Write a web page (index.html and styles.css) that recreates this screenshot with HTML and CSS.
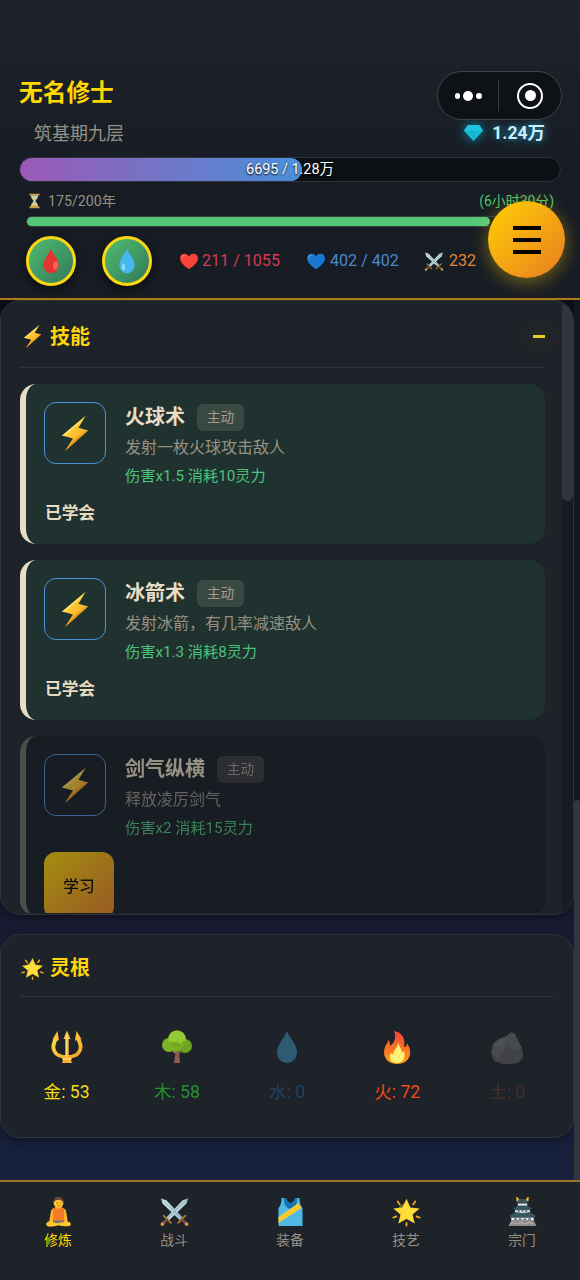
FILE: index.html
```html
<!DOCTYPE html>
<html lang="zh-CN">
<head>
<meta charset="utf-8">
<title>修炼</title>
<link rel="stylesheet" href="styles.css">
</head>
<body>
<svg class="defs" aria-hidden="true">
  <defs>
    <linearGradient id="gold" x1="0" y1="0" x2="1" y2="1"><stop offset="0" stop-color="#ffe04a"/><stop offset="1" stop-color="#f5a21c"/></linearGradient>
    <linearGradient id="steel" x1="0" y1="0" x2="1" y2="1"><stop offset="0" stop-color="#dceef2"/><stop offset="1" stop-color="#9cc0ca"/></linearGradient>
    <linearGradient id="fire" x1="0" y1="0" x2="0" y2="1"><stop offset="0" stop-color="#f44336"/><stop offset="1" stop-color="#ff9d12"/></linearGradient>
    <symbol id="bolt" viewBox="0 0 26 35"><path d="M23.500 0 0 19.500l11 3L3 35l23-20.500-9.500-2.700z" fill="url(#gold)"/><path d="m3 35 23-20.500-1.500-.4L11.500 24z" fill="#ef9a1a"/><path d="M23.500 0 0 19.500l2.500.7L18 7z" fill="#ffe873" opacity=".7"/></symbol>
    <symbol id="star" viewBox="0 0 32 32"><path d="m16 1.500 4.300 9.400 10.200 1.200-7.700 6.700 2.300 10-9.100-5.100-9 5.100 2.300-10-7.800-6.700 10.200-1.200z" fill="#fdd835"/><path d="m16 4 2 9h9l-8 4 4 9-7-5-6 4 3-9-6-5z" fill="#ffeb4f" opacity=".4"/><path d="m6.300 4.500 2.300 3.200M25.700 4.500l-2.300 3.200M1.500 22.200l3.400-1.400M30.500 22.200l-3.400-1.400M16 28v3" stroke="#f6a718" stroke-width="2" stroke-linecap="round"/></symbol>
    <symbol id="drop" viewBox="0 0 32 32"><path d="M16 1c-1 4-9.500 13-9.500 20.500a9.500 9.500 0 0 0 19 0C25.500 14 17 5 16 1z" fill="currentColor"/></symbol>
    <symbol id="heart" viewBox="0 0 32 32"><path d="M16 29C9 24 1 18 1 10.500 1 6 4.500 3 8.500 3c3.500 0 6 1.800 7.500 4.500C17.500 4.800 20 3 23.500 3 27.500 3 31 6 31 10.500 31 18 23 24 16 29z" fill="currentColor"/><path d="M4 10c0-3 2-5 5-5" fill="none" stroke="#fff" stroke-width="2" stroke-linecap="round" opacity=".25"/></symbol>
    <symbol id="swords" viewBox="0 0 32 32"><path d="m1 1 6 2 18 19-3 3L3 7z" fill="url(#steel)"/><path d="m31 1-6 2L7 22l3 3L29 7z" fill="url(#steel)"/><path d="m31 1-23 22" stroke="#6b8e99" stroke-width=".8"/><path d="m1 1 23 22" stroke="#6b8e99" stroke-width=".8"/><path d="m4 20 8 8M28 20l-8 8" stroke="#b27a27" stroke-width="2" stroke-linecap="round"/><path d="m8 24-5 5M24 24l5 5" stroke="#794f41" stroke-width="3.200"/><circle cx="2.600" cy="29.400" r="2" fill="#d39c36"/><circle cx="29.400" cy="29.400" r="2" fill="#d39c36"/></symbol>
    <symbol id="hourglass" viewBox="0 0 16 22"><path d="M3 3h10c0 5-3.500 6-3.500 8S13 14 13 19H3c0-5 3.500-6 3.500-8S3 8 3 3z" fill="#a8d5e7"/><path d="M4.500 6h7L8 10.500zM4 18c1-3 3-4 4-6 1 2 3 3 4 6z" fill="#f6c64a"/><path d="M1 1h14v2.500H1zM1 18.500h14V21H1z" fill="#d99b3b"/></symbol>
    <symbol id="gem" viewBox="0 0 22 19"><path d="M5 1h12l4 6-10 11L1 7z" fill="#18bdd8"/><path d="M5 1h12l4 6H1z" fill="#1ec5dc"/><path d="m7 7 4 11 4-11" fill="#15b4d0"/></symbol>
    <symbol id="trident" viewBox="0 0 32 34"><path d="M5.500 8C-1 18 3 27 16 27S33 18 26.500 8" fill="none" stroke="url(#gold)" stroke-width="3.800"/><path d="M16 7v20" stroke="#ffbe35" stroke-width="3.400"/><path d="M16 .5 19.500 9h-7zM6.500 1 8 10.500l-6.500-1.300zM25.500 1 24 10.500l6.500-1.300z" fill="#ffc13a"/><path d="M11 27h10l-1 3 1 3H11l1-3z" fill="#ffad35"/><path d="M11.500 29h9" stroke="#ffdd75" stroke-width="1.500"/><path d="M15.500 4v22" stroke="#ffe17d"/></symbol>
    <symbol id="tree" viewBox="0 0 32 34"><circle cx="8" cy="15" r="7" fill="#7cb529"/><circle cx="24" cy="16" r="7" fill="#6aa421"/><circle cx="16" cy="9" r="8.800" fill="#93ca32"/><circle cx="15" cy="17" r="5.500" fill="#78b129"/><path d="m13 33 1.300-9-5-4 6 2.500 1-2.500 1 2.500 5-3-4 4.500.700 9z" fill="#8d5c52"/><path d="M9 12c5 5 11 5 15-1" fill="none" stroke="#6aa421" stroke-width="1.500"/></symbol>
    <symbol id="flame" viewBox="0 0 28 34"><path d="M11 1c8 1 12 8 10 16 2 0 3-2 3-4 7 10 2 21-10 21C3 34-1 25 2 17c1-3 3-4 3-7 2 1 2 4 2 6 4-3 7-8 4-15z" fill="url(#fire)"/><path d="M15 12c1 5 4 7 4 11l2-2c2 7-1 12-7 12-7 0-9-6-6-10l2 2c0-5 5-7 5-13z" fill="#fff176"/></symbol>
    <symbol id="rock" viewBox="0 0 32 32"><path d="M1 22 3 13l6-5 6-2 5-4 3 1 7 14 1 9-5 5-13 1-9-3z" fill="#8c8c8c"/><path d="m21 2-4 12 4 5 9-2 1 9-5 5-13 1-9-3-3-7 7 5 5-7" fill="#787878"/><path d="m16 6-3 8-7 2-2-3z" fill="#9b9b9b"/></symbol>
    <symbol id="monk" viewBox="0 0 28 32"><path d="M4 27 6 15q2-4 8-4t8 4l2 12" fill="#fbb92b"/><path d="M8 12q6-3 12 0v15H8z" fill="#f47b27"/><path d="M8 25h12v4H8z" fill="#82766b"/><path d="M1 28c3-4 8 0 12 0 6-1 12-3 14 0 2 5-9 3-13 2-4 1-14 4-13-2z" fill="#ffc62d"/><rect x="11.500" y="9" width="5" height="4" fill="#eaa021"/><circle cx="14" cy="6.500" r="5.200" fill="#ffc62d"/><path d="M8.700 7C8 2 10 0 14 0s6.200 2 5.300 7c-1-3-3-4-5.300-4s-4.500 1-5.300 4z" fill="#65433a"/><path d="M11.500 6.500h2M15 6.500h2M12.600 9q1.400 1 2.800 0" stroke="#65433a" fill="none" stroke-width=".7"/></symbol>
    <symbol id="vest" viewBox="0 0 26 30"><path d="M4 1h4q5 10 10 0h4q0 7 3 10v18H1V11Q4 8 4 1z" fill="#4fb9e6"/><path d="M8 1q5 10 10 0h2q-1 11-7 11T6 1z" fill="#1773b7"/><path d="M1 20 21 6q1 3 3 5L1 26z" fill="#fdc92e"/></symbol>
    <symbol id="castle" viewBox="0 0 30 32"><path d="M3 25h24l3 6H0z" fill="#8f8a88"/><path d="M3 20h24v5H3z" fill="#e9eef0"/><path d="M7 13h16v5H7zM10 7h10v4H10z" fill="#e7edf0"/><path d="M8 6h14l-3-4h-8zM5 12l6-3h8l6 3-2 2H7zM1 20l6-4 8 1 8-1 6 4-1 2H2z" fill="#38565e"/><path d="M9 0v4l2-1zM21 0v4l-2-1z" fill="#f5bd26" stroke="#f5bd26"/><path d="M6 23.500h3m2 0h3m2 0h3m2 0h3M10 15h2m2 0h2m2 0h2" stroke="#344b52" stroke-width="1.400"/><path d="m2 29 3-2 4 2 4-2 5 2 4-2 5 2" fill="none" stroke="#bbb4b0" stroke-width="1.200"/></symbol>
  </defs>
</svg>
<div class="app">
  <header class="top">
    <h1 class="player">无名修士</h1>
    <div class="rank-row"><span>筑基期九层</span><span class="gems"><svg><use href="#gem"/></svg>1.24万</span></div>
    <div class="exp"><div class="exp-fill"></div><span class="exp-text">6695 / 1.28万</span></div>
    <div class="age-row"><span class="age"><svg><use href="#hourglass"/></svg>175/200年</span><span class="left">(6小时30分)</span></div>
    <div class="life"><div class="life-fill"></div></div>
    <div class="status">
      <div class="potion"><svg class="red"><use href="#drop"/><ellipse class="red-shine" cx="17.500" cy="18.500" rx="2.500" ry="4"/></svg></div>
      <div class="potion second"><svg class="blue"><use href="#drop"/><ellipse class="blue-shine" cx="9.500" cy="20" rx="1.800" ry="3.500"/></svg></div>
      <span class="stat hp"><svg><use href="#heart"/></svg>211 / 1055</span>
      <span class="stat mp"><svg><use href="#heart"/></svg>402 / 402</span>
      <span class="stat atk"><svg><use href="#swords"/></svg>232</span>
    </div>
    <div class="capsule"><div class="dots"><i></i><b></b><i></i></div><div class="target"><span></span></div></div>
    <button class="fab" aria-label="菜单"><i></i><i></i><i></i></button>
  </header>

  <main class="scroll">
    <div class="content">
      <section class="panel skills">
        <div class="skills-body">
          <h2 class="title"><svg><use href="#bolt"/></svg><span>技能</span><i class="fold"></i></h2>
          <article class="skill learned">
            <div class="info"><div class="pic"><svg><use href="#bolt"/></svg></div><div class="text"><div class="name-row"><h3>火球术</h3><span class="tag">主动</span></div><p class="desc">发射一枚火球攻击敌人</p><p class="effect">伤害x1.5 消耗10灵力</p></div></div>
            <div class="done">已学会</div>
          </article>
          <article class="skill learned">
            <div class="info"><div class="pic"><svg><use href="#bolt"/></svg></div><div class="text"><div class="name-row"><h3>冰箭术</h3><span class="tag">主动</span></div><p class="desc">发射冰箭，有几率减速敌人</p><p class="effect">伤害x1.3 消耗8灵力</p></div></div>
            <div class="done">已学会</div>
          </article>
          <article class="skill locked">
            <div class="info"><div class="pic"><svg><use href="#bolt"/></svg></div><div class="text"><div class="name-row"><h3>剑气纵横</h3><span class="tag">主动</span></div><p class="desc">释放凌厉剑气</p><p class="effect">伤害x2 消耗15灵力</p></div></div>
            <button class="learn">学习</button>
          </article>
        </div>
        <div class="inner-bar"><i></i></div>
      </section>
      <section class="panel roots">
        <h2 class="title"><svg><use href="#star"/></svg><span>灵根</span></h2>
        <div class="root-list">
          <div class="root metal"><svg><use href="#trident"/></svg><span>金: 53</span></div>
          <div class="root wood"><svg><use href="#tree"/></svg><span>木: 58</span></div>
          <div class="root water off"><svg><use href="#drop"/></svg><span>水: 0</span></div>
          <div class="root fire"><svg><use href="#flame"/></svg><span>火: 72</span></div>
          <div class="root earth off"><svg><use href="#rock"/></svg><span>土: 0</span></div>
        </div>
      </section>
    </div>
    <div class="page-bar"><i></i></div>
  </main>

  <nav class="tabs">
    <div class="tab active"><svg><use href="#monk"/></svg><span>修炼</span></div>
    <div class="tab"><svg><use href="#swords"/></svg><span>战斗</span></div>
    <div class="tab"><svg><use href="#vest"/></svg><span>装备</span></div>
    <div class="tab"><svg><use href="#star"/></svg><span>技艺</span></div>
    <div class="tab"><svg><use href="#castle"/></svg><span>宗门</span></div>
  </nav>
</div>
</body>
</html>
```
FILE: styles.css
```css
* { box-sizing: border-box; }
body, h1, h2, h3, p { margin: 0; }
body { background: #11141d; font-family: Roboto, "Noto Sans CJK SC", sans-serif; }
button { border: 0; padding: 0; font-family: inherit; }
svg { display: block; flex: none; }
.defs { position: absolute; width: 0; height: 0; }
.app { width: 580px; height: 1280px; display: flex; flex-direction: column; overflow: hidden; }

.top { position: relative; z-index: 2; height: 300px; flex: none; padding: 77px 19px 0 19px; border-bottom: 2px solid #b17b13; background: linear-gradient(#1e232a, #171b24 65%, #181c24); }
.player { color: #ffd700; font-size: 23.700px; line-height: 32px; font-weight: 700; }
.rank-row { display: flex; justify-content: space-between; align-items: flex-start; height: 48px; padding: 10px 16px 0 15px; font-size: 18px; line-height: 30px; color: #969185; }
.gems { display: flex; align-items: center; gap: 8px; height: 28px; color: #cceefc; font-size: 17.500px; font-weight: 700; text-shadow: 0 0 9px #20b8e5; }
.gems svg { width: 21px; height: 18px; filter: drop-shadow(0 0 6px #009fba); }
.exp { position: relative; height: 25px; border: 1.500px solid #2d3138; border-radius: 13px; background: #0c0f14; overflow: hidden; }
.exp-fill { width: 282px; height: 100%; border-radius: 12px; background: linear-gradient(90deg, #9b59b6, #4a90d9); }
.exp-text { position: absolute; inset: 0; text-align: center; font-size: 14.400px; line-height: 23px; color: #fff; text-shadow: 0 1px 2px #000; }
.age-row { display: flex; justify-content: space-between; height: 34px; padding: 5px 7px 0 9px; font-size: 14.200px; line-height: 28px; color: #969185; }
.age { display: flex; align-items: center; height: 28px; gap: 7px; }
.age svg { width: 13px; height: 16px; }
.left { color: #4bc56f; font-size: 13.900px; }
.life { width: 528px; height: 11px; margin-left: 7px; border: 1px solid #32423c; border-radius: 6px; background: #101419; }
.life-fill { width: 463px; height: 9px; border-radius: 5px; background: #55c878; }
.status { display: flex; align-items: center; padding: 9px 0 0 7px; }
.potion { width: 50px; height: 50px; border: 3px solid #fbd713; border-radius: 50%; background: linear-gradient(135deg, #50bc70, #32795a); display: flex; align-items: center; justify-content: center; box-shadow: 0 4px 10px #0b100f; }
.potion.second { margin-left: 26px; }
.potion svg { width: 26px; height: 28px; }
.red { color: #e6352f; }
.red-shine { fill: #fa6550; }
.blue { color: #46b7ef; }
.blue-shine { fill: #92d8fb; }
.stat { display: flex; align-items: center; gap: 3px; font-size: 16.100px; line-height: 26px; white-space: nowrap; }
.stat svg { width: 20px; height: 19px; }
.hp { margin-left: 27px; color: #d43c52; width: 101px; }
.hp svg { color: #f64437; }
.mp { margin-left: 26px; gap: 4px; color: #4a88cf; width: 93px; }
.mp svg { color: #1978d2; }
.atk { margin-left: 25px; gap: 5px; color: #e38635; }
.capsule { position: absolute; left: 437px; top: 71px; width: 125px; height: 49px; border: 1.500px solid #414549; border-radius: 25px; background: #0e1115; display: flex; align-items: center; }
.dots { display: flex; align-items: center; justify-content: center; gap: 3px; width: 61px; height: 31px; border-right: 1px solid #393c41; }
.dots i, .dots b { width: 5.500px; height: 6px; border-radius: 50%; background: #fff; }
.dots b { width: 10px; height: 10px; }
.target { width: 26px; height: 26px; margin-left: 18px; border: 2.500px solid #fff; border-radius: 50%; display: flex; align-items: center; justify-content: center; }
.target span { width: 11px; height: 11px; border-radius: 50%; background: #fff; }
.fab { position: absolute; left: 488px; top: 201px; width: 77px; height: 77px; border-radius: 50%; background: linear-gradient(135deg, #ffd000, #e97d24); box-shadow: 0 4px 18px rgba(255,215,0,.42); display: flex; flex-direction: column; align-items: center; justify-content: center; gap: 8px; }
.fab i { width: 28px; height: 4px; background: #060400; }

.scroll { flex: none; height: 880px; display: flex; background: linear-gradient(#0d0e18, #191a30 65%, #17213d); }
.content { width: 574px; }
.panel { border: 1.500px solid #2e3239; border-radius: 20px; background: #1e2229; overflow: hidden; box-shadow: 0 3px 8px rgba(0,0,0,.4); }
.skills { display: flex; height: 615px; margin-bottom: 19px; }
.skills-body { width: 562px; height: 612px; padding: 0 17px 0 19px; overflow: hidden; }
.title { height: 67px; display: flex; align-items: center; gap: 6px; padding: 5px 0 0 1px; color: #ffd50b; font-size: 20px; line-height: 30px; border-bottom: 1.500px solid #30333d; }
.title svg { width: 23px; height: 23px; }
.fold { width: 12px; height: 3px; margin-left: auto; background: #e8cc22; box-shadow: 0 0 20px 5px rgba(225,189,0,.1); }
.skill { height: 160px; margin-top: 16px; padding: 18px 18px 0; border-left: 6px solid #e8dcc4; border-radius: 16px; }
.skills .skill { width: 525px; }
.learned { background: #203230; }
.locked { height: 180px; background: #151a20; opacity: .6; border-left-color: #6b6962; }
.info { display: flex; gap: 19px; height: 98px; }
.pic { width: 62px; height: 62px; border: 1.500px solid #4a90d9; border-radius: 12px; display: flex; align-items: center; justify-content: center; }
.pic svg { width: 26px; height: 35px; }
.text { padding-top: 1px; }
.name-row { display: flex; align-items: flex-start; gap: 12px; height: 29px; }
h3 { color: #e8dcc4; font-size: 20px; line-height: 29px; }
.tag { width: 47px; height: 27px; margin-top: 1px; border-radius: 6px; background: #394843; color: #a39b8b; font-size: 13.500px; line-height: 26px; text-align: center; }
.locked .tag { background: #35363b; }
.desc, .effect { font-size: 16px; line-height: 28px; white-space: nowrap; }
.desc { color: #969083; margin-top: 2px; }
.effect { color: #4bc47a; font-size: 15.200px; }
.done { color: #e8dcc4; font-size: 16.700px; line-height: 24px; font-weight: 700; padding: 2px 0 0 1px; }
.learn { width: 70px; height: 67px; border-radius: 12px; background: linear-gradient(135deg, #ffd700, #e67e22); color: #000; font-size: 15.700px; font-weight: 500; }
.inner-bar { width: 11px; height: 612px; background: #171b23; }
.inner-bar i { display: block; height: 200px; border-radius: 6px; background: #30343c; }
.roots { height: 204px; padding: 0 19px; }
.roots .title { height: 62px; padding-top: 5px; }
.root-list { display: flex; margin: 0 -8.500px; padding-top: 33px; }
.root { flex: 1; display: flex; flex-direction: column; align-items: center; font-size: 17.600px; line-height: 28px; gap: 14px; }
.root svg { width: 34px; height: 34px; }
.metal { color: #f5dc17; }
.wood { color: #268f2d; }
.water { color: #2679c8; }
.water svg { color: #49b8ef; }
.fire { color: #f14a16; }
.earth { color: #844322; }
.off { opacity: .38; }
.page-bar { width: 6px; height: 880px; padding-top: 500px; background: linear-gradient(#141820 0 500px, transparent 500px); }
.page-bar i { display: block; height: 380px; border-radius: 3px 3px 0 0; background: #33363d; }

.tabs { height: 100px; display: flex; border-top: 2px solid #9a7424; background: #1e2229; }
.tab { flex: 1; display: flex; flex-direction: column; align-items: center; padding-top: 15px; color: #969083; font-size: 13.700px; line-height: 24px; gap: 1px; }
.tab svg { width: 29px; height: 30px; }
.active { color: #ffd700; }
```
